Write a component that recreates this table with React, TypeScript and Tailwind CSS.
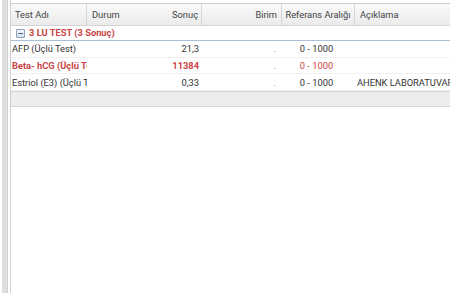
import React from 'react';

type Row = { name: string; durum: string; sonuc: string; birim: string; ref: string; aciklama: string; flag?: boolean };

const rows: Row[] = [
  { name: 'AFP (Üçlü Test)', durum: '', sonuc: '21,3', birim: '.', ref: '0 - 1000', aciklama: '' },
  { name: 'Beta- hCG (Üçlü Test)', durum: '', sonuc: '11384', birim: '.', ref: '0 - 1000', aciklama: '', flag: true },
  { name: 'Estriol (E3) (Üçlü Test)', durum: '', sonuc: '0,33', birim: '.', ref: '0 - 1000', aciklama: 'AHENK LABORATUVARINDA ÇALIŞILMIŞTIR' },
];

const cols = 'grid grid-cols-[76px_53px_62px_80px_73px_1fr]';

const App: React.FC = () => {
  return (
    <div className="flex h-[293px] w-[450px] overflow-hidden bg-white text-[9.3px] text-[#333] font-['Roboto','Liberation_Sans',sans-serif]">
      <div className="w-[2px] shrink-0" />
      <div className="w-[6px] shrink-0 bg-[#dedede] border-r border-[#d2d2d2]" />
      <div className="w-[2px] shrink-0" />
      <div className="flex-1 min-w-0 border-l border-[#cfcfcf] pt-[3px]">
        <div className="border-t border-[#d0d0d0]">
          {/* header */}
          <div className={`${cols} h-[22px] items-center bg-gradient-to-b from-[#f9f9f9] to-[#ebebeb] border-b border-[#d4d4d4] text-[#444]`}>
            <div className="pl-[4px] pt-[1px] h-full flex items-center border-r border-[#d6d6d6]">Test Adı</div>
            <div className="pl-[5px] pt-[1px] h-full flex items-center">Durum</div>
            <div className="pr-[3px] pt-[1px] h-full flex items-center justify-end border-r border-[#d6d6d6]">Sonuç</div>
            <div className="pr-[4px] pt-[1px] h-full flex items-center justify-end border-r border-[#d6d6d6]">Birim</div>
            <div className="pt-[1px] h-full flex items-center justify-center border-r border-[#d6d6d6]">Referans Aralığı</div>
            <div className="pl-[5px] pt-[1px] h-full flex items-center whitespace-nowrap">Açıklama</div>
          </div>

          {/* group row */}
          <div className="h-[15px] flex items-center gap-[4px] pl-[5px] border-b border-[#a9c0d8] bg-white">
            <span className="w-[9px] h-[9px] flex items-center justify-center border border-[#8aa2bd] bg-gradient-to-b from-[#f4f7fb] to-[#d8e2ee] rounded-[1px]">
              <span className="w-[5px] h-[1px] bg-[#4d6580]" />
            </span>
            <span className="font-bold text-[#c94446]">3 LU TEST (3 Sonuç)</span>
          </div>

          {rows.map((r) => (
            <div
              key={r.name}
              className={`${cols} h-[16.7px] pt-[1px] items-center border-b border-[#f0f0f0] whitespace-nowrap ${r.flag ? 'text-[#c94446]' : 'text-[#333]'}`}
            >
              <div className={`pl-[1px] overflow-hidden ${r.flag ? 'font-bold' : ''}`}>{r.name}</div>
              <div className="pl-[5px]">{r.durum}</div>
              <div className={`pr-[3px] text-right ${r.flag ? 'font-bold' : ''}`}>{r.sonuc}</div>
              <div className="pr-[6px] text-right text-[#999]">{r.birim}</div>
              <div className="text-center pr-[4px]">{r.ref}</div>
              <div className="pl-[2px] overflow-hidden">{r.aciklama}</div>
            </div>
          ))}

          {/* footer */}
          <div className="h-[16px] bg-[#ededed] border-t border-[#d6d6d6] border-b border-[#cfcfcf]" />
        </div>
      </div>
    </div>
  );
};

export default App;
